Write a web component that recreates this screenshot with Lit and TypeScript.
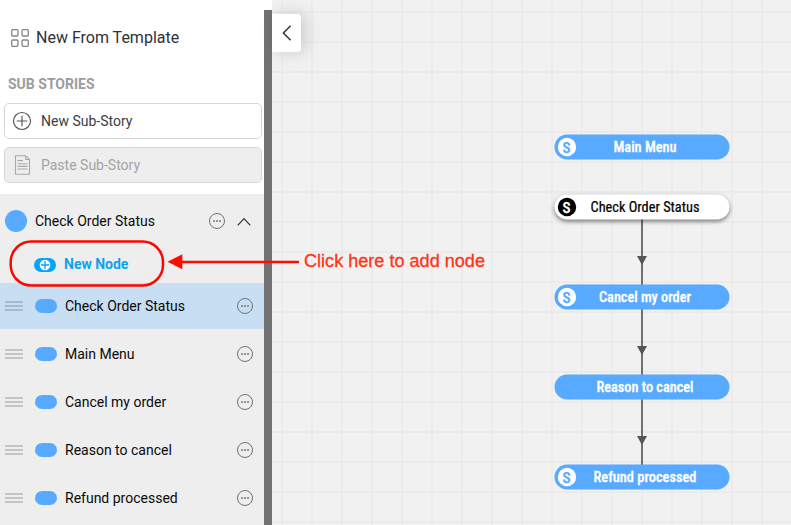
import { LitElement, html, css, svg, nothing } from "lit";
import { customElement, property } from "lit/decorators.js";

@customElement("more-button")
class MoreButton extends LitElement {
  static styles = css`
    :host { display: block; width: 18px; height: 18px; flex: none; }
    svg { display: block; }
  `;
  render() {
    return html`<svg width="18" height="18" viewBox="0 0 18 18">
      <circle cx="9" cy="9" r="7.5" fill="none" stroke="#707173" stroke-width="1" />
      <g fill="#858585">
        <rect x="5" y="8.2" width="2" height="1.7" />
        <rect x="8" y="8.2" width="2" height="1.7" />
        <rect x="11" y="8.2" width="2" height="1.7" />
      </g>
    </svg>`;
  }
}

@customElement("story-sidebar")
class StorySidebar extends LitElement {
  @property({ attribute: false }) nodes: string[] = [];
  @property() selected = "";

  static styles = css`
    :host { display: flex; width: 272px; height: 525px; background: #fff; color: #0a0a0a;
      font: 14px/20px Roboto, sans-serif; box-shadow: 1px 0 5px rgba(0,0,0,.13); white-space: nowrap; }
    svg { display: block; flex: none; }
    .content { width: 264px; height: 525px; overflow: hidden; display: flex; flex-direction: column; }
    .scroll { width: 8px; margin-top: 10px; background: #727272; }
    .template { display: flex; align-items: center; height: 36px; margin-top: 20px; padding-left: 10px; gap: 6px;
      font-size: 16px; color: #2e3238; }
    .heading { height: 20px; margin: 18px 0 9px; padding-left: 8px; font-weight: 700; color: #9c9c9c; }
    .action { box-sizing: border-box; height: 36px; margin: 0 2px 8px 4px; border: 1px solid #d6d6d6; border-radius: 5px;
      display: flex; align-items: center; padding-left: 7px; gap: 9px; color: #3b3e43; background: #fff; }
    .disabled { background: #eee; color: #a3a3a3; margin-bottom: 11px; }
    .group { flex: 1; background: #eee; }
    .title { display: flex; align-items: center; height: 54px; padding: 0 12px 0 5px; }
    .dot { width: 22px; height: 22px; border-radius: 50%; background: #57aaff; margin-right: 8px; }
    .grow { flex: 1; }
    .chevron { margin-left: 10px; }
    .new { display: flex; align-items: center; height: 33px; padding-left: 34px; gap: 8px; margin-bottom: 2px;
      color: #0fa2ea; font-weight: 700; }
    .new span { margin-top: -1px; }
    .row { display: flex; align-items: center; height: 46px; margin-bottom: 2px; padding: 0 10px 0 5px; }
    .selected { background: #c8def2; }
    .grip { box-sizing: border-box; width: 18px; height: 10px; margin-right: 12px; border: solid rgba(90,90,90,.28); border-width: 2px 0;
      display: flex; align-items: center; }
    .grip::before { content: ""; flex: 1; height: 2px; background: rgba(90,90,90,.28); }
    .pill { width: 22px; height: 14px; border-radius: 7px; background: #57aaff; margin-right: 8px; }
  `;

  render() {
    return html`
      <div class="content">
        <div class="template">
          <svg width="20" height="20" viewBox="0 0 20 20" fill="none" stroke="#858585" stroke-width="1.3">
            <rect x="1.7" y="1.7" width="6.3" height="6.3" rx="1.2" /><rect x="12" y="1.7" width="6.3" height="6.3" rx="1.2" />
            <rect x="1.7" y="12" width="6.3" height="6.3" rx="1.2" /><rect x="12" y="12" width="6.3" height="6.3" rx="1.2" />
          </svg>
          <span>New From Template</span>
        </div>
        <div class="heading">SUB STORIES</div>
        <div class="action">
          <svg width="20" height="20" viewBox="0 0 20 20" fill="none" stroke="#55585c" stroke-width="1.2">
            <circle cx="10" cy="10" r="8.5" /><path d="M10 4.7V15.3M4.7 10H15.3" />
          </svg>
          <span>New Sub-Story</span>
        </div>
        <div class="action disabled">
          <svg width="20" height="20" viewBox="0 0 20 20" fill="none" stroke="#a9a9a9" stroke-width="1.1">
            <path d="M3.5 .7H13.7L17.5 4.5V19.3H3.5ZM13.7 .7V4.5H17.5M5.5 5.6H11M5.5 8.7H15.5M5.5 11.4H15.5M5.5 14H15.5" />
          </svg>
          <span>Paste Sub-Story</span>
        </div>
        <div class="group">
          <div class="title">
            <span class="dot"></span><span>Check Order Status</span><span class="grow"></span>
            <more-button></more-button>
            <svg class="chevron" width="16" height="16" viewBox="0 0 16 16" fill="none" stroke="#333" stroke-width="1.2">
              <path d="M1.7 12.3L8 5.6L14.3 12.3" />
            </svg>
          </div>
          <div class="new">
            <svg width="22" height="14" viewBox="0 0 22 14">
              <rect width="22" height="14" rx="7" fill="#05a5fa" />
              <circle cx="11" cy="7" r="5.3" fill="#fff" />
              <path d="M11 3V11M7 7H15" stroke="#05a5fa" stroke-width="1.3" />
            </svg>
            <span>New Node</span>
          </div>
          ${this.nodes.map((n) => html`
            <div class="row ${n === this.selected ? "selected" : ""}">
              <span class="grip"></span><span class="pill"></span><span>${n}</span>
              <span class="grow"></span><more-button></more-button>
            </div>`)}
        </div>
      </div>
      <div class="scroll"></div>
    `;
  }
}

interface FlowNode { label: string; y: number; width: number; start?: boolean; active?: boolean; }

@customElement("flow-canvas")
class FlowCanvas extends LitElement {
  static styles = css`
    :host { display: block; position: relative; flex: 1; height: 525px; background-color: #f1f1f1;
      background-image: linear-gradient(90deg, #ebebeb 2px, transparent 2px), linear-gradient(#ebebeb 2px, transparent 2px);
      background-size: 30px 30px; background-position: 9px 11px; }
    .flow { display: block; }
    .collapse { position: absolute; left: 0; top: 14px; width: 29px; height: 38px; border-radius: 0 4px 4px 0;
      background: #fff; box-shadow: 4px 0 16px rgba(0,0,0,.16); }
    .collapse svg { display: block; }
    .label { font: 500 14px "Roboto Condensed", Roboto, sans-serif; }
    .letter { font: 500 15.5px "Roboto Condensed", Roboto, sans-serif; }
    .label.dark { font-weight: 400; }
    .active { filter: drop-shadow(0 2px 2px rgba(0,0,0,.5)); }
  `;

  private nodes: FlowNode[] = [
    { label: "Main Menu", y: 134.5, width: 63, start: true },
    { label: "Check Order Status", y: 194.5, width: 109, start: true, active: true },
    { label: "Cancel my order", y: 284.5, width: 92, start: true },
    { label: "Reason to cancel", y: 374.5, width: 97 },
    { label: "Refund processed", y: 464.5, width: 103, start: true },
  ];

  render() {
    return html`
      <svg class="flow" width="519" height="525" viewBox="272 0 519 525">
        <path d="M642 219V285M642 309V375M642 399V465" stroke="#707070" stroke-width="2" />
        ${[256, 346, 436].map((y) => svg`<path d="M637 ${y}H647L642 ${y + 9}Z" fill="#555" />`)}
        ${this.nodes.map((n) => svg`
          <g>
            <rect class=${n.active ? "active" : ""} x="554.5" y=${n.y} width="175" height="25" rx="12.5" fill=${n.active ? "#fff" : "#57aaff"} />
            ${n.start ? svg`
              <circle cx="567" cy=${n.y + 12.5} r="9.2" fill=${n.active ? "#000" : "#fff"} />
              <text class="letter" x="562.5" y=${n.y + 18} textLength="8" lengthAdjust="spacingAndGlyphs" fill=${n.active ? "#fff" : "#57aaff"}
                stroke=${n.active ? "#fff" : "#57aaff"} stroke-width="0.3">S</text>` : nothing}
            <text class="label ${n.active ? "dark" : ""}" x=${645 - n.width / 2} y=${n.y + 17.4} textLength=${n.width} lengthAdjust="spacingAndGlyphs"
              fill=${n.active ? "#000" : "#fff"} stroke=${n.active ? "#000" : "#fff"} stroke-width=${n.active ? 0.2 : 0.3}>${n.label}</text>
          </g>`)}
      </svg>
      <div class="collapse">
        <svg width="29" height="38" viewBox="0 0 29 38" fill="none" stroke="#333" stroke-width="1.5">
          <path d="M18.6 11.8L11.4 19L18.6 26.2" />
        </svg>
      </div>
    `;
  }
}

@customElement("app-root")
class AppRoot extends LitElement {
  static styles = css`
    :host { display: flex; position: relative; width: 791px; height: 525px; overflow: hidden; }
    story-sidebar { position: relative; flex: none; }
    .callout { position: absolute; inset: 0; pointer-events: none; }
    .note { font: 17.5px "Liberation Sans", sans-serif; }
  `;
  private nodes = ["Check Order Status", "Main Menu", "Cancel my order", "Reason to cancel", "Refund processed"];

  render() {
    return html`
      <story-sidebar .nodes=${this.nodes} selected="Check Order Status"></story-sidebar>
      <flow-canvas></flow-canvas>
      <svg class="callout" width="791" height="525" viewBox="0 0 791 525">
        <rect x="10.7" y="241.5" width="152.3" height="44" rx="20.5" fill="none" stroke="#fb0900" stroke-width="2.5" />
        <path d="M181 262H299" stroke="#ff0b00" stroke-width="2.3" />
        <path d="M167.5 261.8L182.3 254.2V269.2Z" fill="#ff0b00" />
        <text class="note" x="304" y="266.9" textLength="181" lengthAdjust="spacingAndGlyphs" fill="#ff3414" stroke="#ff3414" stroke-width="0.3">Click here to add node</text>
      </svg>
    `;
  }
}
